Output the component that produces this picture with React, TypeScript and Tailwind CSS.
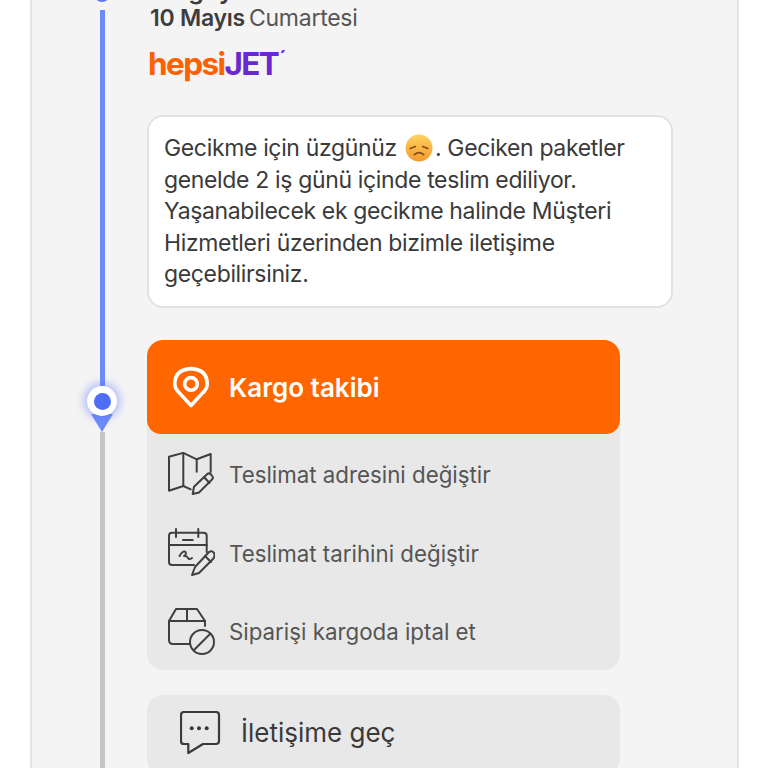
import React from "react";

function MapEditIcon() {
  return (
    <svg width="46" height="44" viewBox="0 0 46 44" fill="none" stroke="#3f3f3f" strokeWidth="2" strokeLinejoin="round" strokeLinecap="round">
      <path d="M22.7 37.3 L15.3 34 L1 38.7 L1 4.7 L15.3 0.9 L28.7 7.3 L42.7 2 L42.7 20" />
      <path d="M15.3 0.9 L15.3 34" />
      <path d="M28.7 7.3 L28.7 19.7" />
      <path d="M24.7 42 L26 34.7 L39.3 22 Q41 20.5 43 22.5 L44.5 24.5 Q45.5 26 44 27.5 L31 40.5 Z" />
      <path d="M36 25 L41.5 31" />
    </svg>
  );
}

function CalendarEditIcon() {
  return (
    <svg width="47" height="49" viewBox="0 0 47 49" fill="none" stroke="#3f3f3f" strokeWidth="2" strokeLinejoin="round" strokeLinecap="round">
      <path d="M26 37 L4 37 Q1 37 1 34 L1 7.7 Q1 4.7 4 4.7 L35.7 4.7 Q38.7 4.7 38.7 7.7 L38.7 24" />
      <path d="M1 17 L38.7 17" />
      <path d="M8 1 L8 9 M30.3 1 L30.3 9 M15 12 L24.7 12" />
      <path d="M11.5 28 Q15 22 17.5 24 Q19 26 16 28 Q19 27.5 20 30 Q21 32 24 30" />
      <path d="M24 47 L27 39 L41 24 Q44 22 46 25 Q47.5 28 45 31 L31 45 Z" />
      <path d="M37 28 L43 34" />
    </svg>
  );
}

function PackageCancelIcon() {
  return (
    <svg width="48" height="48" viewBox="0 0 48 48" fill="none" stroke="#3f3f3f" strokeWidth="2" strokeLinejoin="round" strokeLinecap="round">
      <path d="M22 37 L5 37 Q1 37 1 33 L1 14 L8 2 L29 2 L37 14 L37 19" />
      <path d="M1 14 L37 14" />
      <path d="M19 2 L19 14" />
      <circle cx="34" cy="35" r="12" />
      <path d="M26 43 L42 27" />
    </svg>
  );
}

function ChatIcon() {
  return (
    <svg width="42" height="44" viewBox="0 0 42 44" fill="#3a3a3a" stroke="none">
      <path d="M4 1 L36 1 Q39 1 39 4 L39 30 Q39 33 36 33 L23 33 L8.3 42 L8.3 33 L4 33 Q1 33 1 30 L1 4 Q1 1 4 1 Z" fill="none" stroke="#3a3a3a" strokeWidth="2.2" strokeLinejoin="round" />
      <circle cx="11.7" cy="17.3" r="2" />
      <circle cx="19" cy="17.3" r="2" />
      <circle cx="26.7" cy="17.3" r="2" />
    </svg>
  );
}

function SadFace() {
  return (
    <svg width="28" height="28" viewBox="0 0 27 27" className="mx-[2px] inline-block align-[-6px]">
      <defs>
        <linearGradient id="face" x1="0" y1="0" x2="0" y2="1">
          <stop offset="0" stopColor="#fdd35e" />
          <stop offset="1" stopColor="#f49a2e" />
        </linearGradient>
      </defs>
      <circle cx="13.5" cy="13.5" r="13" fill="url(#face)" />
      <path d="M5 14 L10 12 M22 14 L17 12" stroke="#8a4b1c" strokeWidth="1.6" strokeLinecap="round" />
      <path d="M9 20 Q13.5 16 18 20" stroke="#8a4b1c" strokeWidth="1.6" fill="none" strokeLinecap="round" />
    </svg>
  );
}

const actions = [
  { label: "Teslimat adresini değiştir", icon: <MapEditIcon /> },
  { label: "Teslimat tarihini değiştir", icon: <CalendarEditIcon /> },
  { label: "Siparişi kargoda iptal et", icon: <PackageCancelIcon /> },
];

export default function App() {
  return (
    <div className="h-[768px] w-[768px] overflow-hidden bg-white pl-[30px] font-['Inter',sans-serif]">
      <div className="flex h-[768px] w-[709px] overflow-hidden border-x-2 border-[#e4e4e4] bg-[#f4f4f4]">
        {/* timeline */}
        <div className="ml-[55px] flex w-[30px] shrink-0 flex-col items-center">
          <div className="-mt-[14px] h-[16px] w-[16px] shrink-0 rounded-full bg-[#5b78f0]" />
          <div className="mt-[8px] h-[376px] w-[5px] shrink-0 bg-[#6d8bf8]" />
          <div className="z-10 flex h-[30px] w-[30px] shrink-0 items-center justify-center rounded-full bg-white shadow-[0_0_8px_3px_rgba(90,115,250,0.45)]">
            <div className="h-[17px] w-[17px] rounded-full bg-[#4f6ef5]" />
          </div>
          <svg width="22" height="18" viewBox="0 0 22 18" className="-mt-[2px] shrink-0">
            <path d="M0 0 L22 0 L11 18 Z" fill="#6d8bf8" />
          </svg>
          <div className="w-[5px] grow bg-[#c6c6c6]" />
        </div>

        {/* content */}
        <div className="ml-[30px] w-[526px] shrink-0 text-[#3d3d3d]">
          <div className="-mt-[25px] text-[25px] leading-[30px] font-semibold">Kargoya verildi</div>
          <div className="mt-[-1px] ml-[3px] flex h-[28px] items-center gap-[4px] text-[23px] tracking-[-0.25px]">
            <span className="font-semibold">10 Mayıs</span>
            <span className="font-normal text-[#555555]">Cumartesi</span>
          </div>
          <div className="mt-[14px] ml-[1px] flex h-[36px] items-center text-[31.5px] leading-none font-bold tracking-[-1.6px]">
            <span className="text-[#ff6000]">hepsi</span>
            <span className="text-[#6a28d0]">JET</span>
            <span className="-mt-[12px] ml-[1px] text-[20px] text-[#6a28d0]">´</span>
          </div>

          <div className="mt-[33px] h-[193px] rounded-[16px] border-2 border-[#e2e2e2] bg-white pt-[16px] pl-[15px] text-[23px] leading-[31.6px] tracking-[-0.35px] text-[#3a3a3a]">
            Gecikme için üzgünüz <SadFace />. Geciken paketler
            <br />
            genelde 2 iş günü içinde teslim ediliyor.
            <br />
            Yaşanabilecek ek gecikme halinde Müşteri
            <br />
            Hizmetleri üzerinden bizimle iletişime
            <br />
            geçebilirsiniz.
          </div>

          <div className="mt-[32px] w-[473px] overflow-hidden rounded-[16px] bg-[#e8e8e8]">
            <div className="flex h-[94px] items-center gap-[20px] rounded-[14px] bg-[#ff6600] pl-[26px] text-[26px] font-semibold text-white">
              <svg width="36" height="43" viewBox="0 0 40 46" fill="none" stroke="white" strokeWidth="4" strokeLinejoin="round">
                <path d="M20 43 L7 29 Q2 24 2 19 Q2 3 20 2 Q38 3 38 19 Q38 24 33 29 Z" />
                <circle cx="20" cy="19" r="7" />
              </svg>
              Kargo takibi
            </div>
            <div className="flex h-[236px] flex-col pt-[1px] text-[22.3px] text-[#555555]">
              {actions.map((a) => (
                <div key={a.label} className="flex h-[79px] items-center gap-[11px] pl-[21px]">
                  <div className="w-[50px] shrink-0">{a.icon}</div>
                  <span className="pt-[2px]">{a.label}</span>
                </div>
              ))}
            </div>
          </div>

          <div className="mt-[25px] flex h-[80px] w-[473px] items-center gap-[19px] rounded-[16px] bg-[#e8e8e8] pb-[5px] pl-[33px] text-[26px] text-[#3a3a3a]">
            <ChatIcon />
            İletişime geç
          </div>
        </div>
      </div>
    </div>
  );
}
